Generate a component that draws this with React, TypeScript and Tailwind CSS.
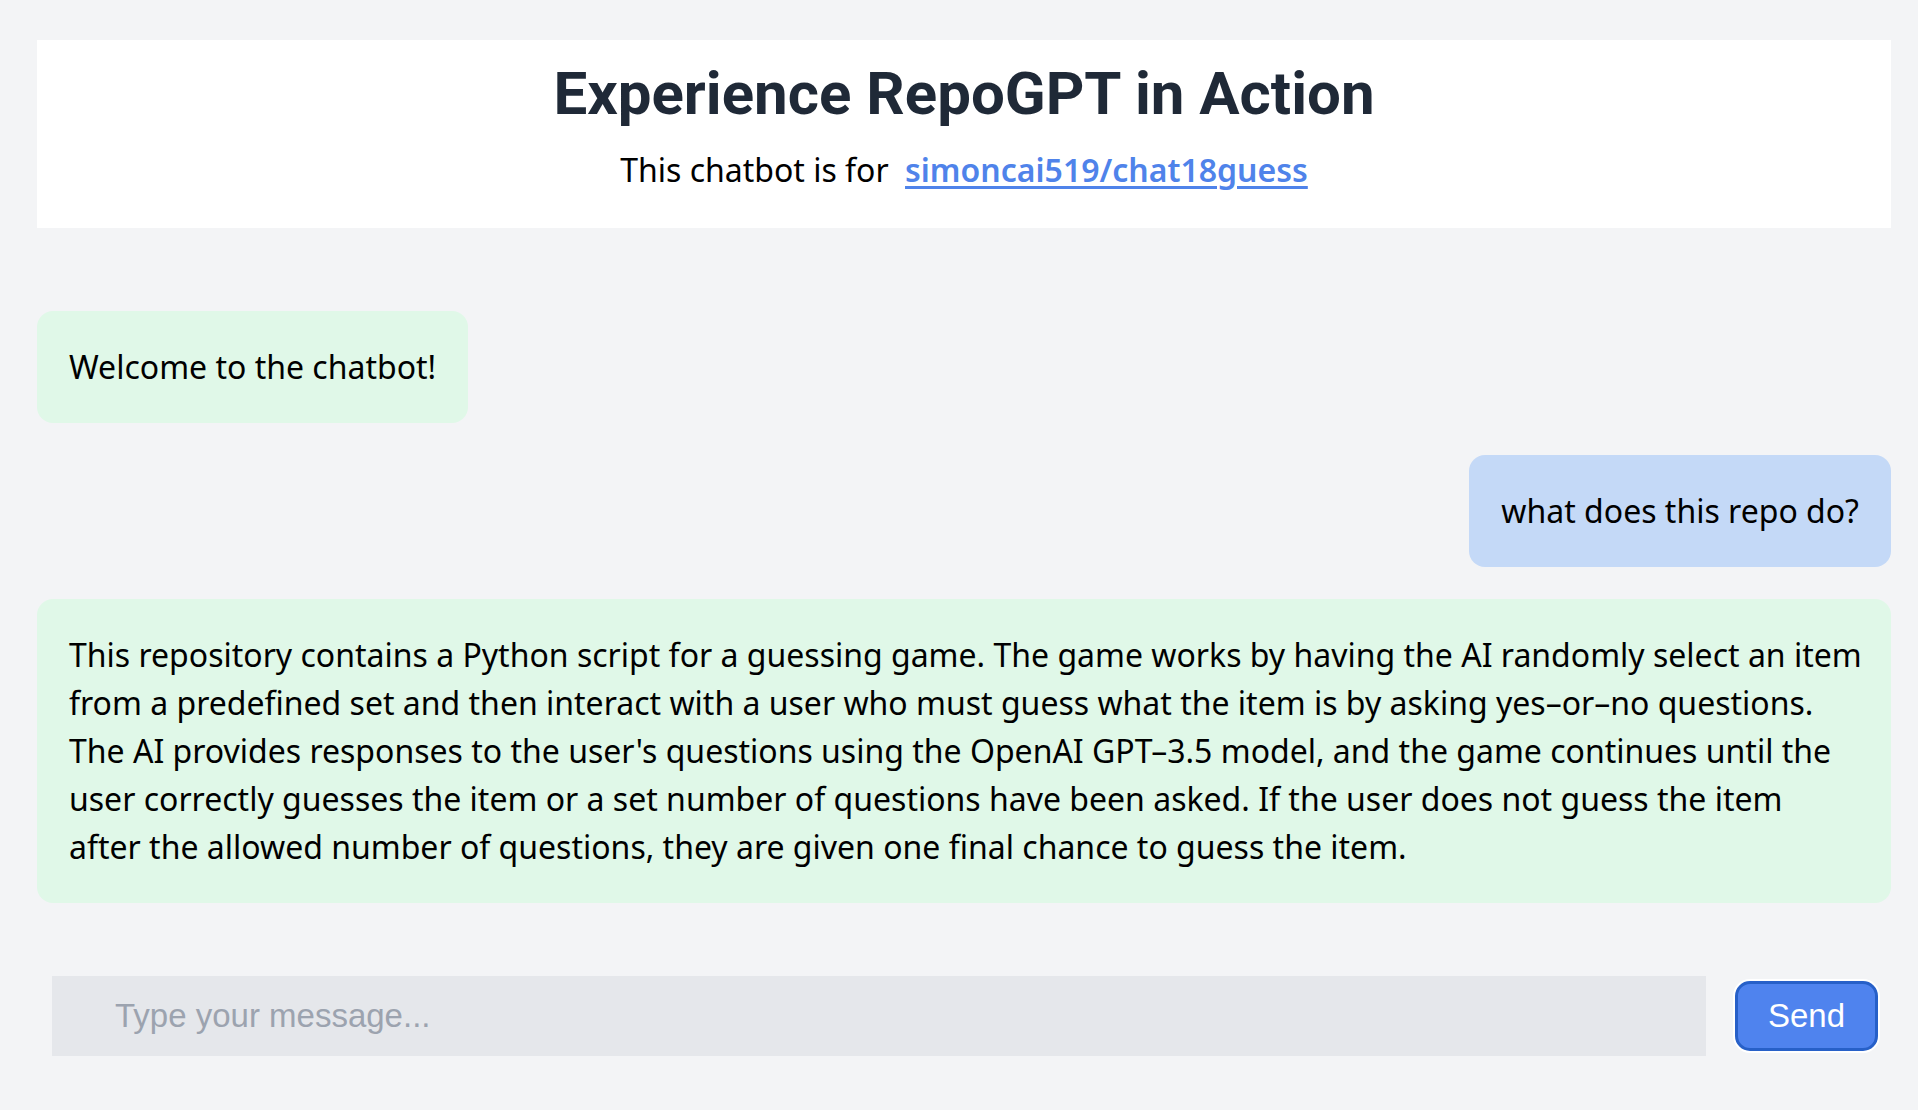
import React, { useState } from 'react';

const bodyFont = { fontFamily: '"Noto Sans", "Noto Sans CJK SC", sans-serif' };

interface Message {
  id: number;
  role: 'bot' | 'user';
  text: string;
}

const initialMessages: Message[] = [
  { id: 1, role: 'bot', text: 'Welcome to the chatbot!' },
  { id: 2, role: 'user', text: 'what does this repo do?' },
  {
    id: 3,
    role: 'bot',
    text:
      "This repository contains a Python script for a guessing game. The game works by having the AI randomly select an item\nfrom a predefined set and then interact with a user who must guess what the item is by asking yes–or–no questions.\nThe AI provides responses to the user's questions using the OpenAI GPT–3.5 model, and the game continues until the\nuser correctly guesses the item or a set number of questions have been asked. If the user does not guess the item\nafter the allowed number of questions, they are given one final chance to guess the item.",
  },
];

function Bubble({ msg }: { msg: Message }) {
  const isUser = msg.role === 'user';
  const isLong = msg.text.length > 80;
  const align = isUser ? 'self-end bg-[#c4d9f7]' : isLong ? 'self-stretch bg-[#e0f8e8]' : 'self-start bg-[#e0f8e8]';
  return (
    <div className={`rounded-2xl px-8 py-8 text-[32px] leading-[48px] text-black whitespace-pre overflow-hidden ${align}`}>
      {msg.text}
    </div>
  );
}

export default function App() {
  const [messages] = useState<Message[]>(initialMessages);
  const [draft, setDraft] = useState('');

  return (
    <div className="min-h-screen bg-[#f3f4f6] pl-[37px] pr-[27px] pt-[40px] pb-[56px]" style={bodyFont}>
      <header className="bg-white pt-[18px] pb-[34px] text-center">
        <h1
          className="text-[60px] leading-[72px] font-bold text-[#1f2937]"
          style={{ fontFamily: 'Roboto, "Noto Sans", sans-serif' }}
        >
          Experience RepoGPT in Action
        </h1>
        <p className="mt-4 text-[32px] leading-[48px] text-black">
          This chatbot is for{' '}
          <a href="#" className="ml-2 font-semibold text-[#4f83ea] underline underline-offset-4">
            simoncai519/chat18guess
          </a>
        </p>
      </header>

      <div className="mt-[83px] flex flex-col gap-8">
        {messages.map((m) => (
          <Bubble key={m.id} msg={m} />
        ))}
      </div>

      <div className="mt-[73px] flex items-center pl-[15px] pr-[13px]">
        <input
          value={draft}
          onChange={(e) => setDraft(e.target.value)}
          placeholder="Type your message..."
          className="h-[80px] flex-1 bg-[#e5e7eb] pl-[63px] text-[33px] text-black placeholder:text-[#9ca3af] outline-none"
          style={{ fontFamily: '"Liberation Sans", Arial, sans-serif' }}
        />
        <button
          className="ml-[29px] h-[70px] rounded-[15px] border-[3px] border-[#2760c8] bg-[#4f83ee] px-[30px] text-[33px] text-white shadow-[0_0_0_2px_#ffffff]"
          style={{ fontFamily: '"Liberation Sans", Arial, sans-serif' }}
        >
          Send
        </button>
      </div>
    </div>
  );
}
